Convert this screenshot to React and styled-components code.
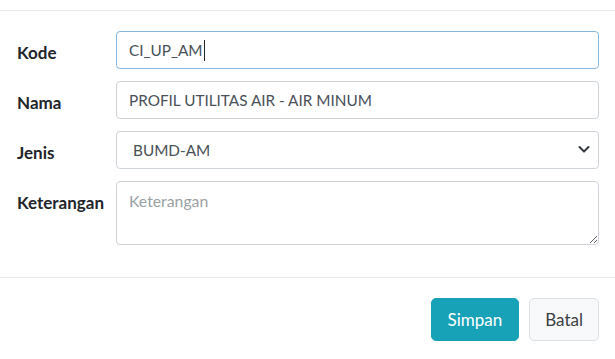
import styled, { createGlobalStyle } from "styled-components";

const GlobalStyle = createGlobalStyle`
  * {
    box-sizing: border-box;
  }
  body {
    margin: 0;
    background: #ffffff;
    font-family: Lato, "Open Sans", sans-serif;
    color: #212529;
  }
`;

const Modal = styled.div`
  width: 615px;
  height: 359px;
  background: #ffffff;
  display: flex;
  flex-direction: column;
`;

const Header = styled.div`
  height: 11px;
  border-bottom: 1px solid #e9ecef;
`;

const Body = styled.div`
  padding: 20px 16px 32px 17px;
  display: flex;
  flex-direction: column;
  gap: 12px;
  border-bottom: 1px solid #e9ecef;
`;

const Row = styled.div`
  display: grid;
  grid-template-columns: 99px 1fr;
  align-items: start;
`;

const Label = styled.label`
  font-weight: 700;
  font-size: 17px;
  line-height: 24px;
  padding-top: 10px;
`;

const fieldBase = `
  width: 100%;
  height: 38px;
  border: 1px solid #ced4da;
  border-radius: 4px;
  background: #ffffff;
  font-family: Lato, "Open Sans", sans-serif;
  font-size: 15.3px;
  color: #495057;
  padding: 0 12px;
  outline: none;
`;

const FakeInput = styled.div`
  ${fieldBase}
  display: flex;
  align-items: center;
  border-color: #86b7de;
`;

const Caret = styled.span`
  display: inline-block;
  width: 1px;
  height: 21px;
  background: #212529;
  margin-left: 1px;
`;

const Input = styled.input`
  ${fieldBase}
`;

const SelectWrap = styled.div`
  position: relative;
`;

const Select = styled.select`
  ${fieldBase}
  appearance: none;
  padding-left: 16px;
`;

const Chevron = styled.svg`
  position: absolute;
  right: 9px;
  top: 14px;
  pointer-events: none;
`;

const TextArea = styled.textarea`
  ${fieldBase}
  height: 64px;
  padding: 7px 12px;
  line-height: 24px;
  font-size: 15.8px;
  resize: vertical;
  &::placeholder {
    color: #9a9fa4;
  }
`;

const Footer = styled.div`
  display: flex;
  justify-content: flex-end;
  gap: 10px;
  padding: 20px 16px 0;
`;

const Button = styled.button`
  height: 43px;
  padding: 0 ${({ $pad }) => $pad}px;
  font-family: Lato, "Open Sans", sans-serif;
  font-size: 17px;
  border-radius: 5px;
  cursor: pointer;
  background: ${({ $primary }) => ($primary ? "#17a2b8" : "#f8f9fa")};
  color: ${({ $primary }) => ($primary ? "#ffffff" : "#3b3f44")};
  border: 1px solid ${({ $primary }) => ($primary ? "#17a2b8" : "#dde0e3")};
`;

export default function App() {
  return (
    <>
      <GlobalStyle />
      <Modal>
        <Header />
        <Body>
          <Row>
            <Label>Kode</Label>
            <FakeInput role="textbox">
              CI_UP_AM
              <Caret />
            </FakeInput>
          </Row>
          <Row>
            <Label>Nama</Label>
            <Input type="text" defaultValue="PROFIL UTILITAS AIR - AIR MINUM" />
          </Row>
          <Row>
            <Label>Jenis</Label>
            <SelectWrap>
              <Select defaultValue="BUMD-AM">
                <option>BUMD-AM</option>
              </Select>
              <Chevron width="12" height="9" viewBox="0 0 12 9">
                <path
                  d="M1.5 2 L6 6.5 L10.5 2"
                  fill="none"
                  stroke="#343a40"
                  strokeWidth="2"
                  strokeLinecap="round"
                  strokeLinejoin="round"
                />
              </Chevron>
            </SelectWrap>
          </Row>
          <Row>
            <Label>Keterangan</Label>
            <TextArea placeholder="Keterangan" />
          </Row>
        </Body>
        <Footer>
          <Button $primary $pad={16}>
            Simpan
          </Button>
          <Button $pad={15}>Batal</Button>
        </Footer>
      </Modal>
    </>
  );
}
